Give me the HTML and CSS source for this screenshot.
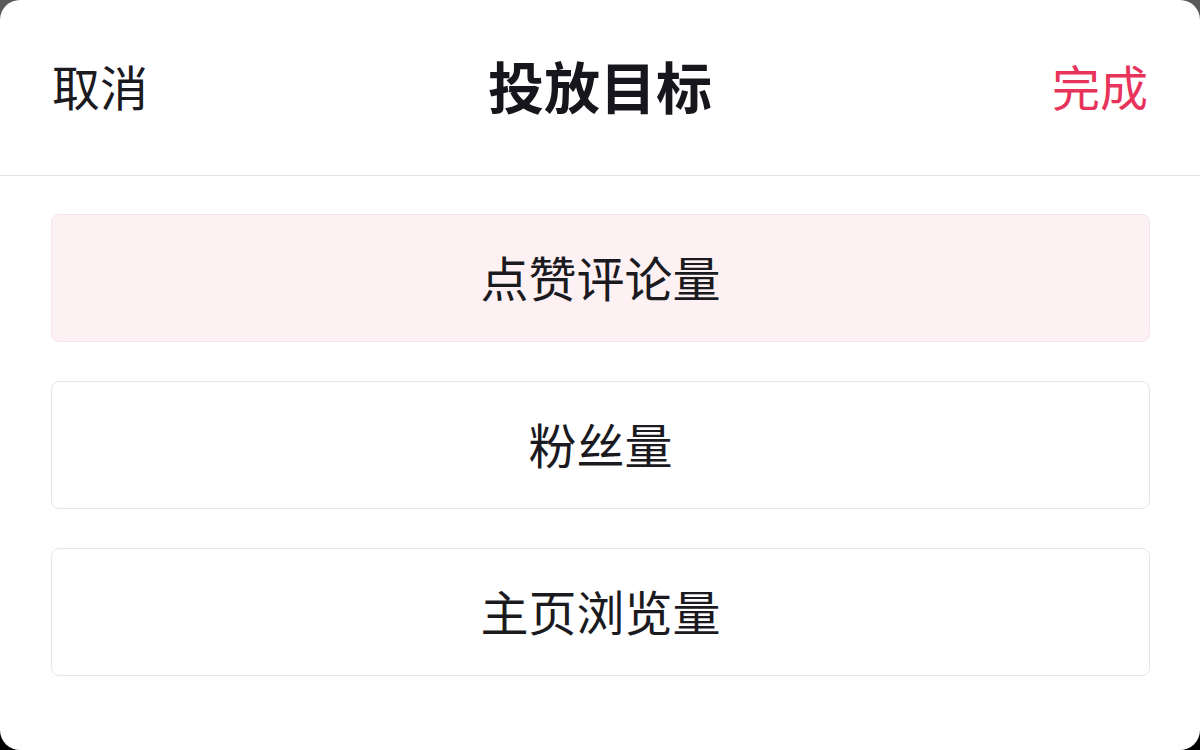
FILE: index.html
```html
<!DOCTYPE html>
<html lang="zh-CN">
<head>
<meta charset="utf-8">
<title>投放目标</title>
<link rel="stylesheet" href="styles.css">
</head>
<body>
<div class="sheet">
  <header class="sheet-header">
    <span class="btn-cancel">取消</span>
    <h1 class="sheet-title">投放目标</h1>
    <span class="btn-done">完成</span>
  </header>
  <div class="option-list">
    <div class="option option-selected">点赞评论量</div>
    <div class="option">粉丝量</div>
    <div class="option">主页浏览量</div>
  </div>
</div>
</body>
</html>
```
FILE: styles.css
```css
html, body {
  margin: 0;
  padding: 0;
  height: 100%;
}
body {
  background: linear-gradient(#5a5a5a, #000000);
  font-family: "Noto Sans CJK SC", "Noto Sans", sans-serif;
  color: #1a1a1f;
}
.sheet {
  width: 1200px;
  height: 750px;
  background: #ffffff;
  border-radius: 20px;
  overflow: hidden;
  display: flex;
  flex-direction: column;
}
.sheet-header {
  height: 176px;
  box-sizing: border-box;
  border-bottom: 1px solid #e0e0e2;
  display: grid;
  grid-template-columns: 1fr auto 1fr;
  align-items: center;
  padding: 0 52px 6px 52px;
}
.btn-cancel {
  font-size: 48px;
  line-height: 1;
  color: #1a1a1f;
  justify-self: start;
}
.sheet-title {
  margin: 0;
  font-size: 56px;
  line-height: 1;
  font-weight: 700;
  color: #16161c;
  justify-self: center;
}
.btn-done {
  font-size: 48px;
  line-height: 1;
  color: #e8335b;
  justify-self: end;
}
.option-list {
  display: flex;
  flex-direction: column;
  gap: 39px;
  padding: 38px 50px 0 51px;
}
.option {
  height: 128px;
  box-sizing: border-box;
  border: 1px solid #e6e6e8;
  border-radius: 8px;
  display: flex;
  align-items: center;
  justify-content: center;
  padding-bottom: 4px;
  font-size: 48px;
  color: #1a1a1f;
  background: #ffffff;
}
.option-selected {
  background: #fdf1f3;
  border-color: #f6e4e8;
}
```
